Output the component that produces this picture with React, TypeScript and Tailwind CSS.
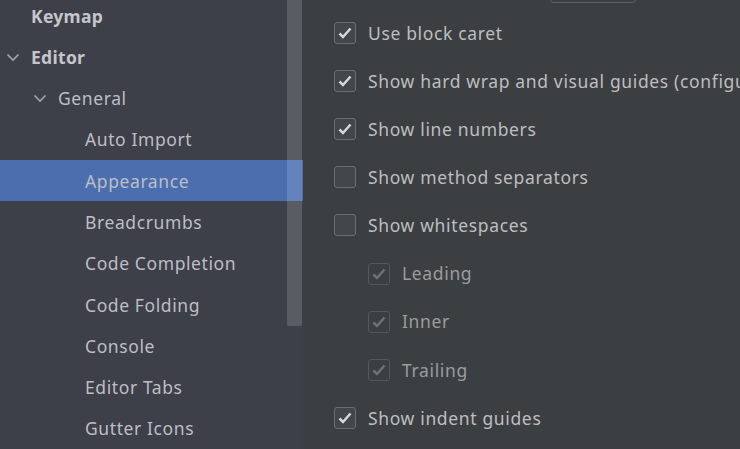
import React from 'react';

type NavItem = { label: string; level: 0 | 1 | 2; bold?: boolean; open?: boolean; selected?: boolean };

const nav: NavItem[] = [
  { label: 'Keymap', level: 0, bold: true },
  { label: 'Editor', level: 0, bold: true, open: true },
  { label: 'General', level: 1, open: true },
  { label: 'Auto Import', level: 2 },
  { label: 'Appearance', level: 2, selected: true },
  { label: 'Breadcrumbs', level: 2 },
  { label: 'Code Completion', level: 2 },
  { label: 'Code Folding', level: 2 },
  { label: 'Console', level: 2 },
  { label: 'Editor Tabs', level: 2 },
  { label: 'Gutter Icons', level: 2 },
];

type Opt = { label: string; checked: boolean; sub?: boolean };

const options: Opt[] = [
  { label: 'Use block caret', checked: true },
  { label: 'Show hard wrap and visual guides (configured in Code Style options)', checked: true },
  { label: 'Show line numbers', checked: true },
  { label: 'Show method separators', checked: false },
  { label: 'Show whitespaces', checked: false },
  { label: 'Leading', checked: true, sub: true },
  { label: 'Inner', checked: true, sub: true },
  { label: 'Trailing', checked: true, sub: true },
  { label: 'Show indent guides', checked: true },
];

function Chevron() {
  return (
    <svg width="14" height="10" viewBox="0 0 14 10" className="shrink-0">
      <path d="M1.5 2.5 L7 8 L12.5 2.5" fill="none" stroke="#a3a6ad" strokeWidth="1.6" />
    </svg>
  );
}

function NavRow({ item }: { item: NavItem }) {
  const pad = item.level === 0 ? 'pl-[6px]' : item.level === 1 ? 'pl-[33px]' : 'pl-[85px]';
  return (
    <div
      className={`h-[41.3px] flex items-center ${pad} ${item.selected ? 'bg-[#4b6eaf]' : ''}`}
    >
      {item.level < 2 && (
        <div className="w-[25px] flex items-center">{item.open && <Chevron />}</div>
      )}
      <span className={`${item.bold ? 'font-bold text-[#c4c6cb] tracking-[0.3px]' : 'text-[#bcbec4] tracking-[0.6px]'} whitespace-nowrap`}>
        {item.label}
      </span>
    </div>
  );
}

function Box({ checked, disabled }: { checked: boolean; disabled?: boolean }) {
  return (
    <div
      className={`w-[22px] h-[22px] rounded-[3px] border shrink-0 flex items-center justify-center ${
        disabled ? 'border-[#55585b] bg-[#3c3f41]' : 'border-[#6b6e70] bg-[#43464a]'
      }`}
    >
      {checked && (
        <svg width="16" height="14" viewBox="0 0 16 14">
          <path
            d="M2.5 7.5 L6 11 L13.5 2.5"
            fill="none"
            stroke={disabled ? '#6f7275' : '#d6d8da'}
            strokeWidth="2.5"
          />
        </svg>
      )}
    </div>
  );
}

export default function App() {
  return (
    <div
      className="w-[740px] h-[449px] flex overflow-hidden text-[17.5px] bg-[#3c3f41]"
      style={{ fontFamily: '"Noto Sans", "Open Sans", sans-serif' }}
    >
      <div className="w-[303px] shrink-0 bg-[#3d4048] relative overflow-hidden">
        <div className="-mt-[5px] flex flex-col">
          {nav.map((n) => (
            <NavRow key={n.label} item={n} />
          ))}
        </div>
        <div className="absolute left-[287px] top-0 w-[15px] h-[326px] bg-white/15 rounded-b-[2px]" />
      </div>
      <div className="flex-1 relative overflow-hidden">
        <div className="absolute left-[247px] -top-[20px] w-[86px] h-[23px] border border-[#5e6163] rounded-[3px]" />
        <div className="pt-[9px] pl-[31px] flex flex-col">
          {options.map((o) => (
            <div key={o.label} className={`h-[48.1px] flex items-center gap-[12px] ${o.sub ? 'pl-[34px]' : ''}`}>
              <Box checked={o.checked} disabled={o.sub} />
              <span className={`whitespace-nowrap tracking-[0.65px] ${o.sub ? 'text-[#9a9c9e]' : 'text-[#bcbec0]'}`}>{o.label}</span>
            </div>
          ))}
        </div>
      </div>
    </div>
  );
}
